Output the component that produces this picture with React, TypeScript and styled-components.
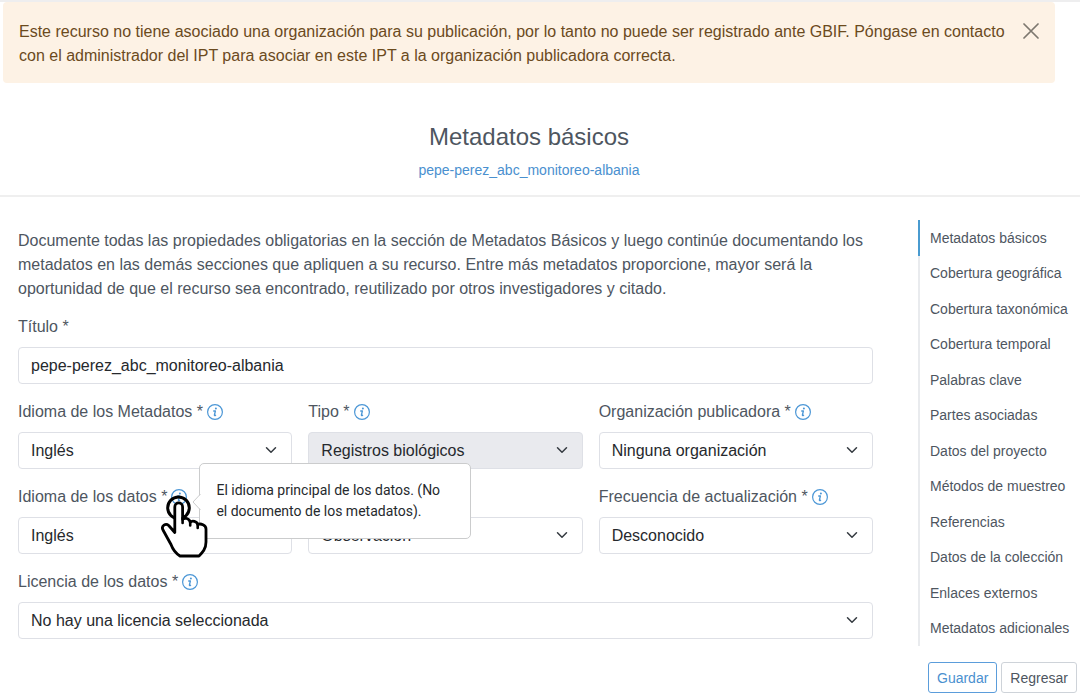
import React from 'react';
import styled, { createGlobalStyle } from 'styled-components';

const GlobalStyle = createGlobalStyle`
  *, *::before, *::after { box-sizing: border-box; }
  body {
    margin: 0;
    background: #fff;
    color: #4e565f;
    font-family: "Liberation Sans", Arial, sans-serif;
    font-size: 16px;
    line-height: 24px;
  }
`;

const Page = styled.div`
  border-top: 2px solid #eeeeef;
`;

const Alert = styled.div`
  display: flex;
  align-items: flex-start;
  gap: 16px;
  margin: 0 25px 0 3px;
  padding: 18px 16px 15px;
  border-radius: 4px;
  background: #fdf2e5;
  color: #6b4a1d;
`;

const AlertText = styled.p`
  flex: 1;
  margin: 0;
`;

const CloseButton = styled.button`
  display: flex;
  padding: 3px 0;
  border: 0;
  background: none;
  color: #7d786f;
  cursor: pointer;
`;

const Header = styled.header`
  display: flex;
  flex-direction: column;
  align-items: center;
  gap: 5px;
  padding: 38px 25px 13px 3px;
  border-bottom: 2px solid #efefef;
`;

const Heading = styled.h1`
  margin: 0;
  font-size: 24px;
  font-weight: 400;
  line-height: 32px;
`;

const ResourceLink = styled.a`
  color: #4a90cf;
  font-size: 14px;
  text-decoration: none;
`;

const Columns = styled.div`
  display: flex;
  align-items: flex-start;
  gap: 45px;
  padding: 23px 6px 0 18px;
`;

const Form = styled.form`
  flex: 1;
  min-width: 0;
  padding-top: 9px;
`;

const Intro = styled.p`
  margin: 0 0 14px;
`;

const Fields = styled.div`
  display: flex;
  flex-direction: column;
  gap: 16px;
`;

const FieldRow = styled.div`
  display: grid;
  grid-template-columns: repeat(3, 1fr);
  gap: 16px;
`;

const FieldBox = styled.div`
  display: flex;
  flex-direction: column;
  gap: 8px;
`;

const LabelLine = styled.div`
  display: flex;
  align-items: center;
  gap: 4px;
  height: 24px;
  white-space: nowrap;
`;

const InfoAnchor = styled.span`
  position: relative;
  display: flex;
`;

const InfoButton = styled.button`
  display: flex;
  padding: 0;
  border: 0;
  background: none;
  color: #4c97d6;
  cursor: pointer;
`;

const controlBorder = '1px solid #dee0e6';

const TextInput = styled.input`
  width: 100%;
  height: 37px;
  padding: 0 12px;
  border: ${controlBorder};
  border-radius: 4px;
  background: #fff;
  color: #26292d;
  font: inherit;
`;

const SelectWrap = styled.div`
  position: relative;
`;

const SelectBox = styled.select`
  display: block;
  width: 100%;
  height: 37px;
  padding: 0 36px 0 12px;
  border: ${controlBorder};
  border-radius: 4px;
  background: #fff;
  color: #26292d;
  font: inherit;
  appearance: none;

  &:disabled {
    background: #e9eaee;
    color: #26292d;
    opacity: 1;
  }
`;

const Chevron = styled.svg`
  position: absolute;
  top: 12px;
  right: 13px;
  pointer-events: none;
`;

const Tooltip = styled.div`
  position: absolute;
  z-index: 2;
  top: -26px;
  left: 28px;
  width: 272px;
  padding: 16px 24px 16px 16px;
  border: 1px solid #cbcccd;
  border-radius: 5px;
  background: #fff;
  color: #26292d;
  font-family: Roboto, sans-serif;
  font-size: 14px;
  line-height: 21px;
  white-space: normal;
`;

const TooltipArrow = styled.svg`
  position: absolute;
  top: 29px;
  left: -8px;
`;

const HandPointer = styled.svg`
  position: absolute;
  z-index: 3;
  top: 5px;
  left: -11px;
  pointer-events: none;
`;

const Sidebar = styled.aside`
  flex: none;
  width: 156px;
`;

const NavList = styled.ul`
  display: grid;
  grid-auto-rows: 1fr;
  min-height: 426px;
  margin: 0;
  padding: 0;
  list-style: none;
`;

const NavItem = styled.li<{ $active?: boolean }>`
  display: flex;
  align-items: center;
  padding-left: 10px;
  border-left: 2px solid ${(p) => (p.$active ? '#4a9bd0' : '#e9ebee')};
`;

const NavLink = styled.a`
  color: #4e565f;
  font-size: 14px;
  text-decoration: none;
  white-space: nowrap;
`;

const Actions = styled.div`
  display: flex;
  gap: 4px;
  padding: 16px 0 0 10px;
`;

const ActionButton = styled.button<{ $primary?: boolean }>`
  height: 31px;
  padding: 0 8px;
  border: 1px solid ${(p) => (p.$primary ? '#5b9ddb' : '#ced3d9')};
  border-radius: 3px;
  background: #fff;
  color: ${(p) => (p.$primary ? '#4a90cf' : '#4e565f')};
  font-family: inherit;
  font-size: 14px;
  cursor: pointer;
`;

const sections = [
  'Metadatos básicos',
  'Cobertura geográfica',
  'Cobertura taxonómica',
  'Cobertura temporal',
  'Palabras clave',
  'Partes asociadas',
  'Datos del proyecto',
  'Métodos de muestreo',
  'Referencias',
  'Datos de la colección',
  'Enlaces externos',
  'Metadatos adicionales',
];

function InfoIcon() {
  return (
    <svg width="16" height="16" viewBox="0 0 16 16" fill="none" stroke="currentColor" aria-hidden="true">
      <circle cx="8" cy="8" r="7.400" strokeWidth="1.200" />
      <path
        d="M6.700 7h1.700l-1 4c-.15.700.5.900 1.200.3"
        strokeWidth="1.300"
        strokeLinecap="round"
        strokeLinejoin="round"
      />
      <circle cx="8.900" cy="4.500" r="1" fill="currentColor" stroke="none" />
    </svg>
  );
}

function Hand() {
  return (
    <HandPointer width="50" height="66" viewBox="0 0 50 66" fill="none" aria-hidden="true">
      <circle cx="18.5" cy="13.800" r="10.800" stroke="#000" strokeWidth="3" />
      <path
        d="M14.800 38.500V13c0-5.400 7.800-5.400 7.800 0V25.500c1.800-2.400 6.800-1.200 7.600 2.700 2-2.200 6.700-1 7.500 2.300 3-1.300 8.300.300 8.300 4.500V48c0 7-3.500 10.500-7 14H20c-4-2.500-7-6-9-11.500L3 36c-2.200-4.500 2.800-7 5.700-4.500z"
        fill="#fff"
        stroke="#000"
        strokeWidth="2.800"
        strokeLinejoin="round"
      />
      <path d="M22.600 24v5M30.200 28v3.500M37.700 30v4" stroke="#000" strokeWidth="2.600" strokeLinecap="round" />
    </HandPointer>
  );
}

interface SelectFieldProps {
  id: string;
  label: string;
  value: string;
  disabled?: boolean;
  hint?: string;
  /** Names the select for assistive technology only, leaving its label line blank. */
  quietLabel?: boolean;
}

function SelectField({ id, label, value, disabled, hint, quietLabel }: SelectFieldProps) {
  return (
    <FieldBox>
      <LabelLine>
        {!quietLabel && (
          <>
            <label htmlFor={id}>{label} *</label>
            <InfoAnchor>
              <InfoButton type="button" aria-label={`Ayuda: ${label}`}>
                <InfoIcon />
              </InfoButton>
              {hint && (
                <>
                  <Tooltip role="tooltip">
                    <TooltipArrow width="9" height="18" viewBox="0 0 9 18" aria-hidden="true">
                      <path d="M9 0v1L1 9l8 8v1z" fill="#fff" />
                      <path d="M8.500 1L1 9l7.500 8" fill="none" stroke="#cbcccd" />
                    </TooltipArrow>
                    {hint}
                  </Tooltip>
                  <Hand />
                </>
              )}
            </InfoAnchor>
          </>
        )}
      </LabelLine>
      <SelectWrap>
        <SelectBox
          id={id}
          defaultValue={value}
          disabled={disabled}
          aria-label={quietLabel ? label : undefined}
        >
          <option value={value}>{value}</option>
        </SelectBox>
        <Chevron width="16" height="12" viewBox="0 0 16 16" aria-hidden="true">
          <path
            d="m2 5 6 6 6-6"
            fill="none"
            stroke="#343a40"
            strokeWidth="2"
            strokeLinecap="round"
            strokeLinejoin="round"
          />
        </Chevron>
      </SelectWrap>
    </FieldBox>
  );
}

export default function App() {
  return (
    <Page>
      <GlobalStyle />
      <Alert role="alert">
        <AlertText>
          Este recurso no tiene asociado una organización para su publicación, por lo tanto no puede ser
          registrado ante GBIF. Póngase en contacto con el administrador del IPT para asociar en este IPT a la
          organización publicadora correcta.
        </AlertText>
        <CloseButton type="button" aria-label="Cerrar">
          <svg width="16" height="16" viewBox="0 0 16 16" aria-hidden="true">
            <path d="M1 1l14 14M15 1L1 15" stroke="currentColor" strokeWidth="1.700" strokeLinecap="round" />
          </svg>
        </CloseButton>
      </Alert>
      <Header>
        <Heading>Metadatos básicos</Heading>
        <ResourceLink href="#recurso">pepe-perez_abc_monitoreo-albania</ResourceLink>
      </Header>
      <Columns>
        <Form>
          <Intro>
            Documente todas las propiedades obligatorias en la sección de Metadatos Básicos y luego continúe
            documentando los metadatos en las demás secciones que apliquen a su recurso. Entre más metadatos
            proporcione, mayor será la oportunidad de que el recurso sea encontrado, reutilizado por otros
            investigadores y citado.
          </Intro>
          <Fields>
            <FieldBox>
              <LabelLine>
                <label htmlFor="titulo">Título *</label>
              </LabelLine>
              <TextInput id="titulo" type="text" defaultValue="pepe-perez_abc_monitoreo-albania" />
            </FieldBox>
            <FieldRow>
              <SelectField id="idioma-metadatos" label="Idioma de los Metadatos" value="Inglés" />
              <SelectField id="tipo" label="Tipo" value="Registros biológicos" disabled />
              <SelectField id="organizacion" label="Organización publicadora" value="Ninguna organización" />
            </FieldRow>
            <FieldRow>
              <SelectField
                id="idioma-datos"
                label="Idioma de los datos"
                value="Inglés"
                hint="El idioma principal de los datos. (No el documento de los metadatos)."
              />
              <SelectField id="subtipo" label="Subtipo" value="Observación" quietLabel />
              <SelectField id="frecuencia" label="Frecuencia de actualización" value="Desconocido" />
            </FieldRow>
            <SelectField id="licencia" label="Licencia de los datos" value="No hay una licencia seleccionada" />
          </Fields>
        </Form>
        <Sidebar>
          <nav aria-label="Secciones">
            <NavList>
              {sections.map((name, i) => (
                <NavItem key={name} $active={i === 0}>
                  <NavLink href={`#seccion-${i + 1}`}>{name}</NavLink>
                </NavItem>
              ))}
            </NavList>
          </nav>
          <Actions>
            <ActionButton type="button" $primary>
              Guardar
            </ActionButton>
            <ActionButton type="button">Regresar</ActionButton>
          </Actions>
        </Sidebar>
      </Columns>
    </Page>
  );
}
